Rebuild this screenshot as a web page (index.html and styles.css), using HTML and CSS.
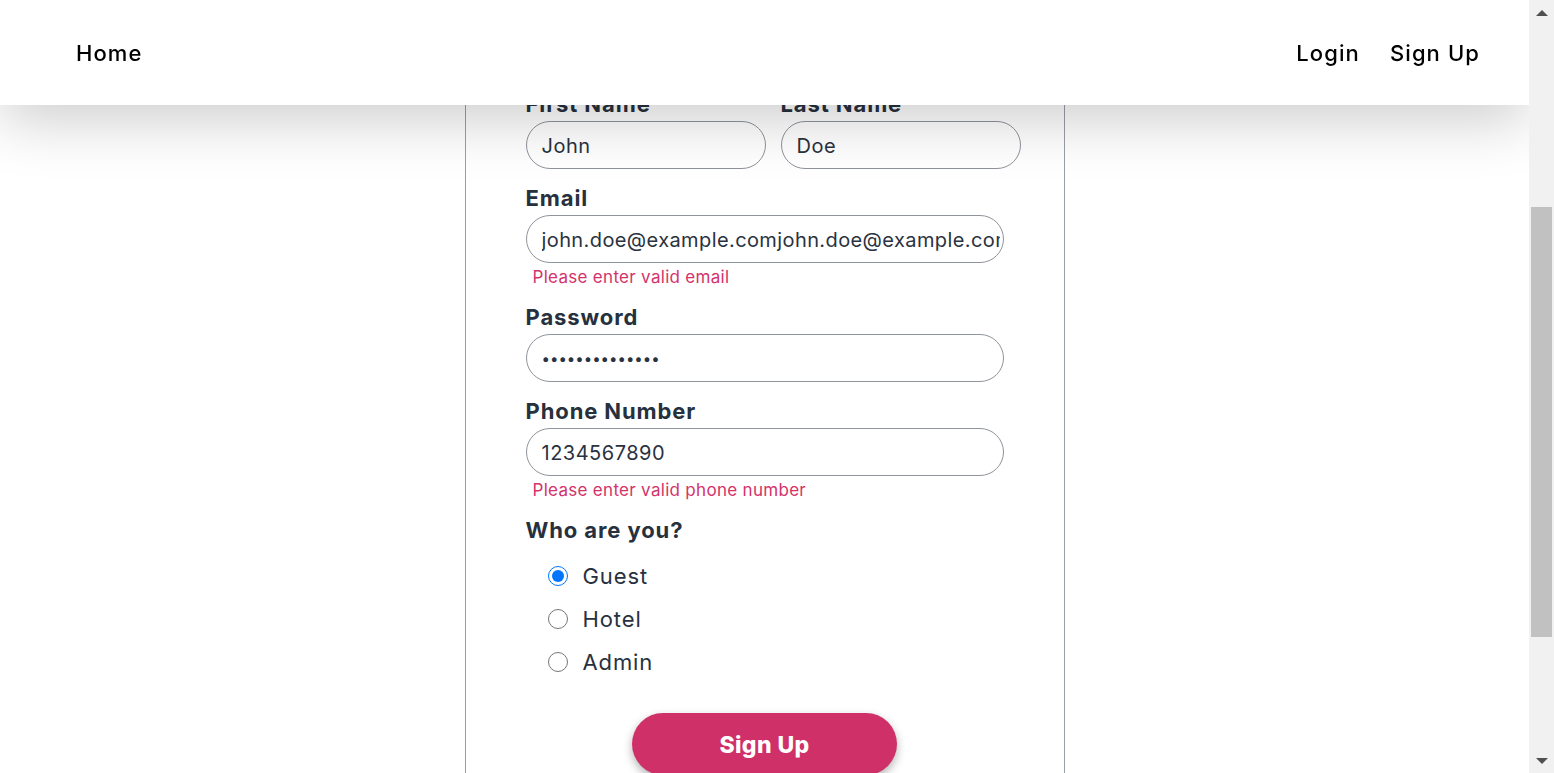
FILE: index.html
```html
<!DOCTYPE html>
<html lang="en">
<head>
<meta charset="utf-8">
<title>Sign Up</title>
<link rel="stylesheet" href="styles.css">
</head>
<body>
<header class="topbar">
  <nav class="nav">
    <a class="nav-link" href="#">Home</a>
    <div class="nav-right">
      <a class="nav-link" href="#">Login</a>
      <a class="nav-link" href="#">Sign Up</a>
    </div>
  </nav>
</header>
<main class="page">
  <section class="card">
    <form class="form">
      <div class="row">
        <div class="field field-half">
          <label class="label" for="first">First Name</label>
          <input class="input" id="first" type="text" value="John">
        </div>
        <div class="field field-half">
          <label class="label" for="last">Last Name</label>
          <input class="input" id="last" type="text" value="Doe">
        </div>
      </div>
      <div class="field">
        <label class="label" for="email">Email</label>
        <input class="input input-email" id="email" type="text" value="john.doe@example.comjohn.doe@example.com">
        <span class="error">Please enter valid email</span>
      </div>
      <div class="field">
        <label class="label" for="password">Password</label>
        <input class="input input-password" id="password" type="password" value="password123456">
      </div>
      <div class="field">
        <label class="label" for="phone">Phone Number</label>
        <input class="input" id="phone" type="text" value="1234567890">
        <span class="error">Please enter valid phone number</span>
      </div>
      <div class="field">
        <span class="label">Who are you?</span>
        <div class="radios">
          <label class="radio"><input type="radio" name="role" checked><span>Guest</span></label>
          <label class="radio"><input type="radio" name="role"><span>Hotel</span></label>
          <label class="radio"><input type="radio" name="role"><span>Admin</span></label>
        </div>
      </div>
      <div class="actions">
        <button class="btn" type="button">Sign Up</button>
      </div>
    </form>
  </section>
</main>
<div class="scrollbar" aria-hidden="true">
  <div class="sb-btn sb-up"></div>
  <div class="sb-track"><div class="sb-thumb"></div></div>
  <div class="sb-btn sb-down"></div>
</div>
<script src="script.js"></script>
</body>
</html>
```
FILE: styles.css
```css
html {
  scrollbar-width: none;
}
html, body {
  margin: 0;
  padding: 0;
}
body {
  font-family: Inter, "Noto Sans", sans-serif;
  background: #ffffff;
  color: #28313e;
  padding-right: 25px;
}

/* window scrollbar drawn as an overlay */
.scrollbar {
  position: fixed;
  top: 0;
  right: 0;
  bottom: 0;
  width: 25px;
  background: #f1f1f1;
  display: flex;
  flex-direction: column;
  z-index: 20;
}
.sb-btn {
  height: 25px;
  flex: none;
  display: flex;
  align-items: center;
  justify-content: center;
}
.sb-up::before {
  content: "";
  border-left: 6px solid transparent;
  border-right: 6px solid transparent;
  border-bottom: 6px solid #505050;
}
.sb-down::before {
  content: "";
  border-left: 6px solid transparent;
  border-right: 6px solid transparent;
  border-top: 6px solid #505050;
}
.sb-track {
  flex: 1;
}
.sb-thumb {
  margin: 182px 2px 0;
  height: 430px;
  background: #c1c1c1;
}

.topbar {
  position: fixed;
  top: 0;
  left: 0;
  right: 25px;
  height: 105px;
  background: #ffffff;
  box-shadow: 0 15px 60px rgba(0, 0, 0, 0.2);
  z-index: 10;
}
.nav {
  height: 100%;
  display: flex;
  align-items: center;
  justify-content: space-between;
  padding: 0 49px 2px 76px;
}
.nav-right {
  display: flex;
  gap: 30px;
}
.nav-link {
  color: #000000;
  text-decoration: none;
  font-size: 22px;
  font-weight: 500;
  letter-spacing: 1.1px;
}

.page {
  box-sizing: border-box;
  min-height: 1300px;
  padding: 105px 0 80px;
  display: flex;
  justify-content: center;
  align-items: flex-start;
}
.card {
  box-sizing: border-box;
  width: 600px;
  margin-top: 140px;
  border: 1px solid #9a9ea6;
  padding: 173px 60px 60px;
}
.form {
  display: flex;
  flex-direction: column;
  gap: 17px;
}
.row {
  display: flex;
  gap: 15px;
}
.field {
  display: flex;
  flex-direction: column;
}
.field-half {
  width: 240px;
  flex: none;
}
.label {
  font-size: 22px;
  line-height: 24px;
  font-weight: 700;
  letter-spacing: 0.9px;
  color: #27303d;
  margin-bottom: 5px;
}
.input {
  box-sizing: border-box;
  width: 100%;
  height: 48px;
  border: 1px solid #8f949c;
  border-radius: 24px;
  padding: 1px 3px 0 15px;
  font-family: Inter, "Noto Sans", sans-serif;
  font-size: 20px;
  letter-spacing: 0.5px;
  color: #2a3240;
  background: #ffffff;
  outline: none;
}
.input-email {
  width: 478px;
  letter-spacing: 0.4px;
}
.input-password {
  font-size: 15px;
  letter-spacing: 0;
}
.error {
  margin-top: 3px;
  padding-left: 7px;
  font-size: 17px;
  line-height: 22px;
  letter-spacing: 0.3px;
  color: #d3336a;
}
.radios {
  display: flex;
  flex-direction: column;
  margin-top: 7px;
  padding-left: 22px;
}
.radio {
  display: flex;
  align-items: center;
  gap: 15px;
  height: 43px;
  font-size: 22px;
  color: #28313e;
  letter-spacing: 0.9px;
}
.radio input {
  width: 20px;
  height: 20px;
  margin: 0;
  accent-color: #0075ff;
}
.actions {
  display: flex;
  justify-content: center;
  margin-top: 13px;
}
.btn {
  width: 265px;
  height: 62px;
  border: none;
  border-radius: 31px;
  padding-top: 2px;
  background: #cf3068;
  color: #ffffff;
  font-family: Inter, "Noto Sans", sans-serif;
  font-size: 23px;
  font-weight: 800;
  letter-spacing: 0.4px;
  box-shadow: 0 4px 10px rgba(0, 0, 0, 0.3);
  cursor: pointer;
}
```
FILE: script.js
```js
if ('scrollRestoration' in history) {
  history.scrollRestoration = 'manual';
}
window.scrollTo(0, 327);
window.addEventListener('load', function () {
  window.scrollTo(0, 327);
});
```
